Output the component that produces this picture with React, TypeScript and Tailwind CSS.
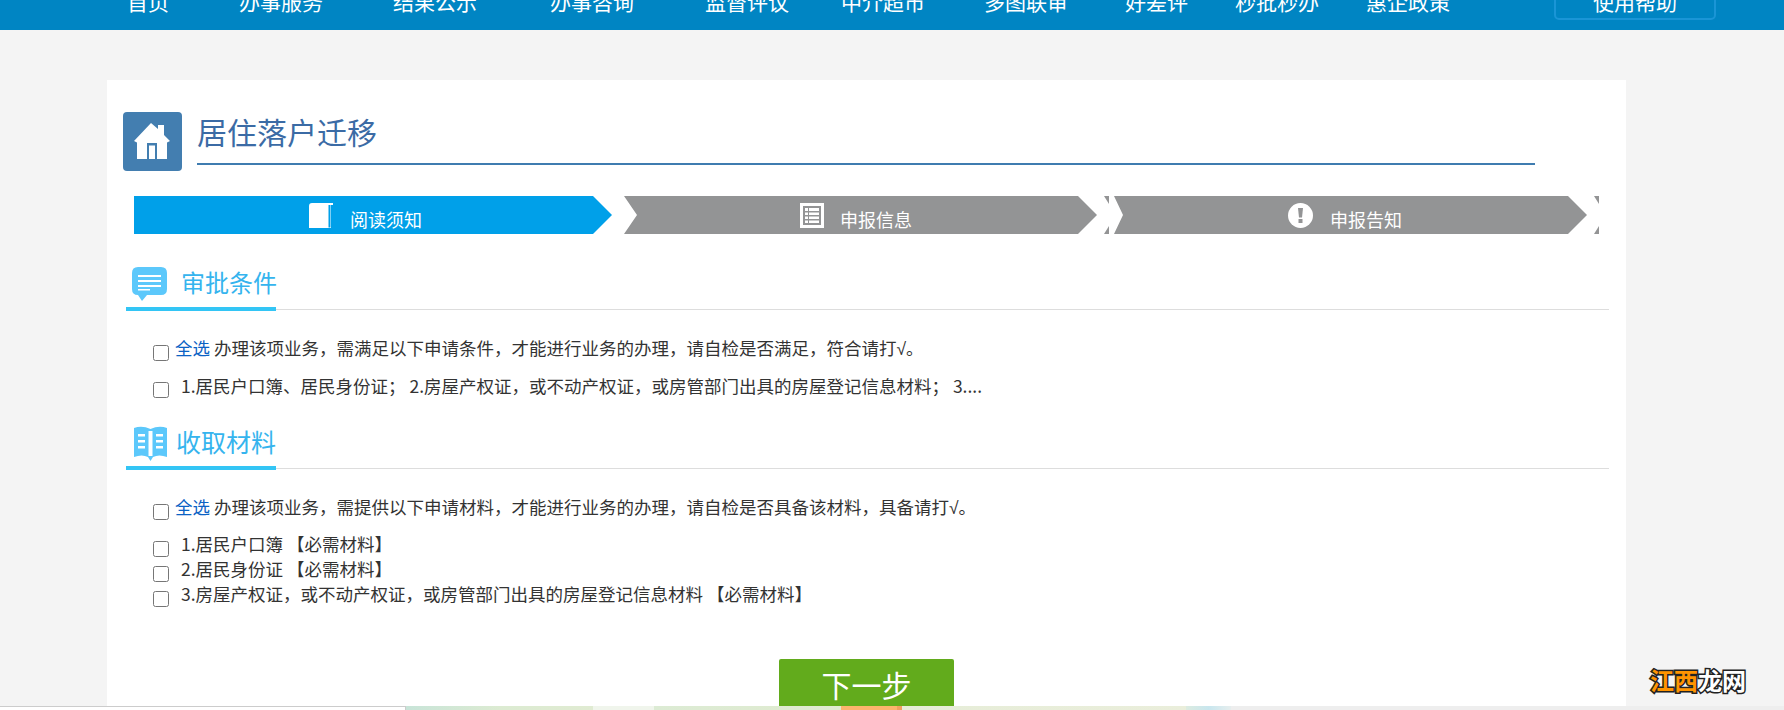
import React from "react";

const FONT = "font-['Noto_Sans_CJK_SC','Microsoft_YaHei',sans-serif]";

const nav = [
  { t: "首页", c: "ml-[127px]" },
  { t: "办事服务", c: "ml-[70px]" },
  { t: "结果公示", c: "ml-[70px]" },
  { t: "办事咨询", c: "ml-[73px]" },
  { t: "监督评议", c: "ml-[71px]" },
  { t: "中介超市", c: "ml-[52px]" },
  { t: "多图联审", c: "ml-[59px]" },
  { t: "好差评", c: "ml-[57px]" },
  { t: "秒批秒办", c: "ml-[47px]" },
  { t: "惠企政策", c: "ml-[47px]" },
];

function HomeIcon() {
  return (
    <svg width="36" height="36" viewBox="0 0 36 36" fill="#fff" className="-ml-[2px] -mt-[1px]">
      <path d="M17 0 L24 6 V2 H30 V12 L36 18 L33 19.5 V36 H3 V19.5 L0 18 Z M13 20 V36 H23 V20 Z M15 22.5 H21 V36 H15 Z" fillRule="evenodd" />
    </svg>
  );
}

function BookIcon() {
  return (
    <svg width="24" height="25" viewBox="0 0 24 25" fill="#fff">
      <path d="M3 0 H24 V2 H22 V25 H0 V3 Q0 0 3 0 Z" />
      <path d="M19.5 2 H21.5 V24.5 H19.5 Z" fill="#00a0e9" />
    </svg>
  );
}

function ListIcon() {
  return (
    <svg width="24" height="25" viewBox="0 0 24 25" fill="#fff">
      <path d="M0 0 H24 V25 H0 Z M3 3 V22 H21 V3 Z" fillRule="evenodd" />
      <path d="M5 5 H19 V8 H5 Z M5 9.5 H19 V12 H5 Z M5 13.5 H19 V16 H5 Z M5 17.5 H19 V20 H5 Z" />
      <path d="M8 5 H9 V20 H8 Z" fill="#939495" />
    </svg>
  );
}

function AlertIcon() {
  return (
    <svg width="25" height="25" viewBox="0 0 25 25">
      <circle cx="12.5" cy="12.5" r="12.5" fill="#fff" />
      <path d="M10 5 H15 L14 14.5 H11 Z" fill="#939495" />
      <rect x="10.5" y="16" width="4" height="4" fill="#939495" />
    </svg>
  );
}

function ChatIcon() {
  return (
    <svg width="35" height="35" viewBox="0 0 35 35">
      <path d="M6 0 H29 Q35 0 35 6 V22 Q35 28 29 28 H15 L10 34 L6 28 Q0 28 0 22 V6 Q0 0 6 0 Z" fill="#5cc8fb" />
      <path d="M6 8 H29 V10 H6 Z M6 13 H29 V15 H6 Z M6 18 H29 V20 H6 Z M6 22 H18 V23.5 H6 Z" fill="#fff" />
    </svg>
  );
}

function OpenBookIcon() {
  return (
    <svg width="35" height="35" viewBox="0 0 35 35">
      <path d="M1 2 Q9 -1 17.5 3 Q26 -1 34 2 V31 Q26 28 20 31 L17.5 35 L15 31 Q9 28 1 31 Z" fill="#5cc8fb" />
      <path d="M15.5 5 H19.5 V30 H15.5 Z" fill="#fff" />
      <path d="M5 8 H12 V10.5 H5 Z M5 14 H12 V16.5 H5 Z M5 20 H12 V22.5 H5 Z M23 8 H30 V10.5 H23 Z M23 14 H30 V16.5 H23 Z M23 20 H30 V22.5 H23 Z" fill="#fff" />
    </svg>
  );
}

function Corners() {
  return (
    <>
      <div className="absolute right-0 top-0 h-[8px] w-[5px] bg-[#939495] [clip-path:polygon(0_0,100%_0,100%_100%)]" />
      <div className="absolute right-0 bottom-0 h-[8px] w-[5px] bg-[#939495] [clip-path:polygon(100%_0,100%_100%,0_100%)]" />
    </>
  );
}

function Step({ shape, pad, gap, icon, label, corners }: { shape: string; pad: string; gap: string; icon: React.ReactNode; label: string; corners?: boolean }) {
  return (
    <div className="relative h-[38px] w-[485px] shrink-0">
      <div className={`flex h-full w-full items-center ${shape} ${pad}`}>
        {icon}
        <span className={`${gap} mt-[8px] text-[18px] leading-[26px] text-white`}>{label}</span>
      </div>
      {corners && <Corners />}
    </div>
  );
}

function SectionHead({ icon, title, cls, mt }: { icon: React.ReactNode; title: string; cls: string; mt: string }) {
  return (
    <div className={`ml-[19px] flex w-[1483px] items-end ${mt}`}>
      <div className="flex h-[47px] w-[150px] shrink-0 items-start border-b-4 border-[#33c5f5]">
        {icon}
        <span className={`${cls} whitespace-nowrap leading-[32px] text-[#35b4ee]`}>{title}</span>
      </div>
      <div className="mb-[1px] flex-1 border-b border-[#dddddd]" />
    </div>
  );
}

function Row({ box, h, mt, gap, children }: { box: string; h: string; mt?: string; gap: string; children: React.ReactNode }) {
  return (
    <div className={`ml-[46px] flex items-start text-[17.5px] text-[#333] ${h} ${mt ?? ""}`}>
      <input type="checkbox" className={`m-0 h-[16px] w-[16px] shrink-0 ${box}`} />
      <div className={`${gap} whitespace-pre leading-[26px]`}>{children}</div>
    </div>
  );
}

function SelectAll({ text }: { text: string }) {
  return (
    <>
      <span className="text-[#0b62c4]">全选</span> {text}
      <span className="font-['Liberation_Sans',sans-serif]">√</span>。
    </>
  );
}

export default function App() {
  return (
    <div className={`relative flex h-[710px] w-full flex-col overflow-hidden bg-[#f4f4f4] ${FONT}`}>
      <header className="flex h-[30px] shrink-0 items-start overflow-hidden bg-[#0085c3] text-white">
        <nav className="-mt-[13px] flex text-[21px] leading-[28px]">
          {nav.map((n) => (
            <a key={n.t} className={`${n.c} whitespace-nowrap`}>{n.t}</a>
          ))}
        </nav>
        <button className="absolute left-[1554px] top-[-19px] h-[39px] w-[162px] rounded-[5px] border-2 border-[#1a95d6] text-[21px] leading-[36px]">使用帮助</button>
      </header>

      <main className="ml-[107px] mt-[50px] h-[626px] w-[1519px] shrink-0 overflow-hidden bg-white">
        <div className="ml-[16px] mt-[32px] flex items-start">
          <div className="flex h-[59px] w-[59px] shrink-0 items-center justify-center rounded-[4px] bg-[#437eb0]">
            <HomeIcon />
          </div>
          <div className="ml-[15px] h-[53px] w-[1338px] border-b-2 border-[#3f7cb0] text-[30px] leading-[38px] text-[#3b6ba5]">居住落户迁移</div>
        </div>

        <div className="ml-[27px] mt-[25px] flex gap-[5px]">
          <Step
            shape="bg-[#00a0e9] [clip-path:polygon(0_0,459px_0,478px_19px,459px_38px,0_38px)]"
            pad="pl-[175px]"
            gap="ml-[17px]"
            icon={<BookIcon />}
            label="阅读须知"
          />
          <Step
            shape="bg-[#939495] [clip-path:polygon(0_0,454px_0,473px_19px,454px_38px,0_38px,13px_19px)]"
            pad="pl-[176px]"
            gap="ml-[16px]"
            icon={<ListIcon />}
            label="申报信息"
            corners
          />
          <Step
            shape="bg-[#939495] [clip-path:polygon(0_0,454px_0,473px_19px,454px_38px,0_38px,9px_19px)]"
            pad="pl-[174px]"
            gap="ml-[17px]"
            icon={<AlertIcon />}
            label="申报告知"
            corners
          />
        </div>

        <SectionHead
          mt="mt-[30px]"
          icon={<div className="ml-[6px] mt-[3px]"><ChatIcon /></div>}
          title="审批条件"
          cls="ml-[14px] mt-[2px] text-[24px]"
        />
        <Row box="mt-[10px]" h="h-[26px]" mt="mt-[24px]" gap="ml-[6px]">
          <SelectAll text="办理该项业务，需满足以下申请条件，才能进行业务的办理，请自检是否满足，符合请打" />
        </Row>
        <Row box="mt-[9px]" h="h-[26px]" mt="mt-[12px]" gap="ml-[8px]">
          {" 1.居民户口簿、居民身份证； 2.房屋产权证，或不动产权证，或房管部门出具的房屋登记信息材料； 3...."}
        </Row>

        <SectionHead
          mt="mt-[24px]"
          icon={<div className="ml-[7px] mt-[3px]"><OpenBookIcon /></div>}
          title="收取材料"
          cls="ml-[8px] mt-[2px] text-[25px]"
        />
        <Row box="mt-[10px]" h="h-[26px]" mt="mt-[24px]" gap="ml-[6px]">
          <SelectAll text="办理该项业务，需提供以下申请材料，才能进行业务的办理，请自检是否具备该材料，具备请打" />
        </Row>
        <Row box="mt-[10px]" h="h-[25px]" mt="mt-[11px]" gap="ml-[8px]">{" 1.居民户口簿 【必需材料】"}</Row>
        <Row box="mt-[10px]" h="h-[25px]" gap="ml-[8px]">{" 2.居民身份证 【必需材料】"}</Row>
        <Row box="mt-[10px]" h="h-[25px]" gap="ml-[8px]">{" 3.房屋产权证，或不动产权证，或房管部门出具的房屋登记信息材料 【必需材料】"}</Row>

        <div className="ml-[672px] mt-[53px] flex h-[60px] w-[175px] justify-center rounded-[2px] bg-[#62ab1c] pt-[1px] text-[30px] leading-[48px] text-white">下一步</div>
      </main>

      <footer className="flex h-[4px] w-full shrink-0">
        <div className="h-full w-[406px] border-r border-t border-[#cccccc] bg-white" />
        <div className="h-full w-[187px] bg-gradient-to-r from-[#c8e4d8] via-[#dcebd2] to-[#e0ebd2]" />
        <div className="h-full w-[61px] bg-[#f0f5ec]" />
        <div className="h-full w-[187px] bg-gradient-to-r from-[#dcebd4] to-[#e0ebd0]" />
        <div className="h-full w-[56px] bg-[#fcb56e]" />
        <div className="h-full w-[5px] bg-[#f0a060]" />
        <div className="h-full w-[284px] bg-gradient-to-r from-[#e6edd8] to-[#eaeedb]" />
        <div className="h-full w-[45px] bg-gradient-to-r from-[#dcebe0] via-[#c8e6ee] to-[#e6eeee]" />
        <div className="h-full flex-1 bg-[#eeeeee]" />
      </footer>

      <div className="absolute left-[1650px] top-[664px] text-[24px] font-bold leading-[32px] [-webkit-text-stroke:3px_#222] [paint-order:stroke_fill]">
        <span className="text-[#ff9400]">江西</span>
        <span className="text-white">龙网</span>
      </div>
    </div>
  );
}
